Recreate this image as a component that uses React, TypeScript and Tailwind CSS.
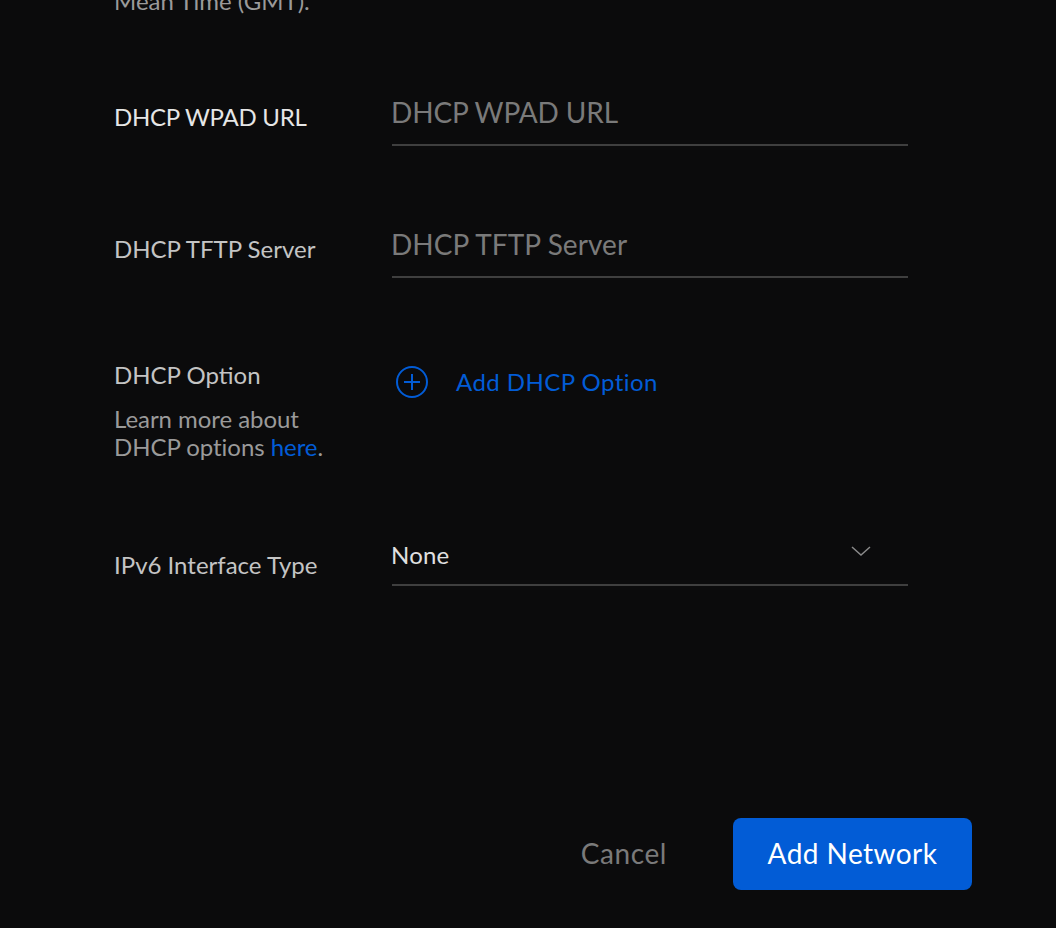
function TextRow({ label, placeholder, labelClass, placeholderClass }: { label: string; placeholder: string; labelClass: string; placeholderClass: string }) {
  return (
    <div className="flex h-[132px]">
      <div className={`w-[278px] pt-[21px] text-[24px] leading-[32px] ${labelClass}`}>{label}</div>
      <div className={`w-[516px] h-[66px] pt-[14px] border-b-2 border-[#3f3f3f] text-[28px] leading-[36px] text-[#7a7a7a] ${placeholderClass}`}>
        <span className="-ml-px">{placeholder}</span>
      </div>
    </div>
  )
}

export default function App() {
  return (
    <div className="w-[1056px] h-[928px] overflow-hidden bg-[#0b0b0c] font-['Lato','Liberation_Sans',sans-serif]">
      <div className="pl-[114px] -mt-[13px]">
        <div className="h-[93px] text-[24px] leading-[28px] text-[#9a9a9a]">Mean Time (GMT).</div>
        <TextRow label="DHCP WPAD URL" placeholder="DHCP WPAD URL" labelClass="text-[#e6e6e6] tracking-[-0.26px]" placeholderClass="tracking-[-0.12px]" />
        <TextRow label="DHCP TFTP Server" placeholder="DHCP TFTP Server" labelClass="text-[#c4c4c4]" placeholderClass="tracking-[0.08px]" />

        <div className="flex h-[190px]">
          <div className="w-[278px]">
            <div className="pt-[15px] text-[24px] leading-[32px] text-[#c4c4c4]">DHCP Option</div>
            <div className="mt-[14px] text-[24px] leading-[28px] tracking-[-0.05px] text-[#9a9a9a]">
              Learn more about
              <br />
              DHCP options <span className="text-[#025cd6]">here</span>.
            </div>
          </div>
          <div className="flex items-start gap-[28px] pt-[22px] pl-[4px]">
            <svg width="32" height="32" viewBox="0 0 32 32" fill="none" stroke="#025cd6" strokeWidth="2">
              <circle cx="16" cy="16" r="15" />
              <path d="M16 8v16M8 16h16" />
            </svg>
            <span className="text-[24px] leading-[32px] tracking-[0.45px] text-[#025cd6]">Add DHCP Option</span>
          </div>
        </div>

        <div className="flex h-[284px]">
          <div className="w-[278px] pt-[15px] text-[24px] leading-[32px] text-[#c4c4c4]">IPv6 Interface Type</div>
          <div className="relative w-[516px] h-[52px] pt-[5px] border-b-2 border-[#3f3f3f] text-[24px] leading-[32px] tracking-[0.2px] text-[#e0e0e0]">
            <span className="-ml-px">None</span>
            <svg className="absolute right-[37px] top-[12px]" width="20" height="10" viewBox="0 0 20 10" fill="none" stroke="#8a8a8a" strokeWidth="1.5">
              <path d="M1 1l9 8 9-8" />
            </svg>
          </div>
        </div>

        <div className="flex items-center justify-end w-[858px] gap-[66px]">
          <button className="pb-[2px] text-[28px] leading-[36px] tracking-[0.6px] text-[#7a7a7a]">Cancel</button>
          <button className="w-[239px] h-[72px] pb-[2px] rounded-[8px] bg-[#025cd6] text-[28px] leading-[36px] tracking-[0.45px] text-white">Add Network</button>
        </div>
      </div>
    </div>
  )
}
